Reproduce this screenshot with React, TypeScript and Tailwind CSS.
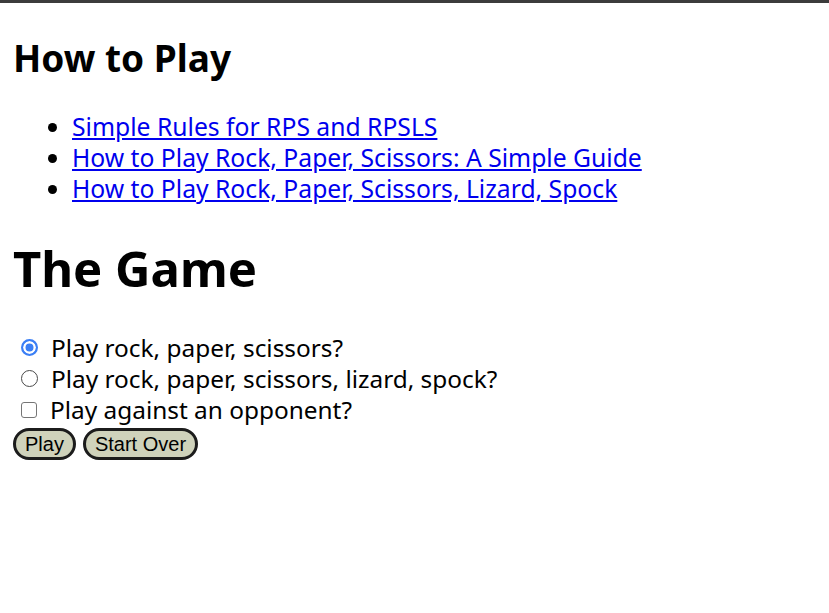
import React, { useState } from 'react';

const links = [
  'Simple Rules for RPS and RPSLS',
  'How to Play Rock, Paper, Scissors: A Simple Guide',
  'How to Play Rock, Paper, Scissors, Lizard, Spock',
];

const App: React.FC = () => {
  const [mode, setMode] = useState('rps');
  const [opponent, setOpponent] = useState(false);

  return (
    <div className="min-h-screen bg-white border-t-[3px] border-[#3c3c3c] px-[13px] text-black font-['Noto_Sans',sans-serif]">
      {/* How to play */}
      <h2 className="mt-[33px] text-[37px] leading-[44px] font-bold">How to Play</h2>
      <ul className="mt-[31px] pl-[59px] list-disc text-[24.7px] leading-[31px]">
        {links.map((label) => (
          <li key={label}>
            <a href="#" className="text-[#0000ee] underline">
              {label}
            </a>
          </li>
        ))}
      </ul>

      {/* The game */}
      <h1 className="mt-[34px] text-[49px] leading-[60px] font-bold">The Game</h1>
      <div className="mt-[34px] text-[24.4px] leading-[31px]">
        <label className="flex items-center">
          <input
            type="radio"
            name="mode"
            checked={mode === 'rps'}
            onChange={() => setMode('rps')}
            className="appearance-none ml-[8px] mr-[13px] w-[17px] h-[17px] rounded-full border-[1.5px] border-[#4a4a4a] bg-white checked:border-2 checked:border-[#3b7ff5] checked:bg-[#3b7ff5] checked:shadow-[inset_0_0_0_2.5px_white]"
          />
          Play rock, paper, scissors?
        </label>
        <label className="flex items-center">
          <input
            type="radio"
            name="mode"
            checked={mode === 'rpsls'}
            onChange={() => setMode('rpsls')}
            className="appearance-none ml-[8px] mr-[13px] w-[17px] h-[17px] rounded-full border-[1.5px] border-[#4a4a4a] bg-white checked:border-2 checked:border-[#3b7ff5] checked:bg-[#3b7ff5] checked:shadow-[inset_0_0_0_2.5px_white]"
          />
          Play rock, paper, scissors, lizard, spock?
        </label>
        <label className="flex items-center">
          <input
            type="checkbox"
            checked={opponent}
            onChange={(e) => setOpponent(e.target.checked)}
            className="appearance-none ml-[8px] mr-[13px] w-[16px] h-[16px] rounded-[3px] border-[1.5px] border-[#767676] bg-white checked:bg-[#3b7ff5] checked:border-[#3b7ff5]"
          />
          Play against an opponent?
        </label>
      </div>
      <div className="flex gap-[7px] mt-[3px] font-['Liberation_Sans',Arial,sans-serif] text-[20px] leading-[22px]">
        <button className="px-[9px] py-[2px] rounded-full border-[3px] border-[#1c1c1c] bg-[#cfd2bb]">Play</button>
        <button className="px-[9px] py-[2px] rounded-full border-[3px] border-[#1c1c1c] bg-[#cfd2bb]">Start Over</button>
      </div>
    </div>
  );
};

export default App;
